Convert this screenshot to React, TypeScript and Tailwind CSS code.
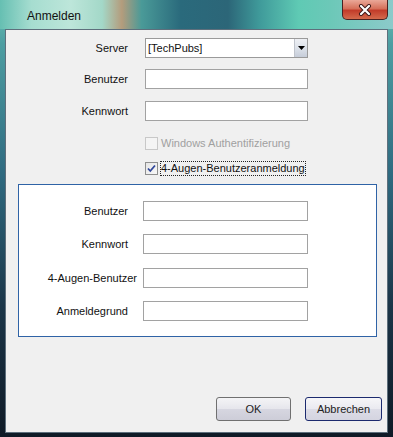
import React from "react";

function TextBox({ w }: { w: string }) {
  return <div className={`${w} h-[20px] border border-[#a2a2a2] bg-white`} />;
}

function TopRow({ label, children, mt }: { label: string; children: React.ReactNode; mt: string }) {
  return (
    <div className={`flex items-center h-[20px] ${mt}`}>
      <div className="w-[122px] text-right">{label}</div>
      <div className="ml-[17px]">{children}</div>
    </div>
  );
}

function GroupRow({ label, mt, labelShift }: { label: string; mt: string; labelShift?: string }) {
  return (
    <div className={`flex items-center h-[20px] ${mt}`}>
      <div className="w-[109px] text-right whitespace-nowrap">
        <span className={labelShift ?? ""}>{label}</span>
      </div>
      <div className="ml-[15px]">
        <TextBox w="w-[165px]" />
      </div>
    </div>
  );
}

export default function App() {
  return (
    <div className="relative w-[393px] h-[437px] overflow-hidden flex flex-col [font-family:'Liberation_Sans',Arial,sans-serif] text-[11px] text-[#111] bg-[linear-gradient(180deg,#6cc4b4_0%,#4d9ea2_10%,#2f6a80_40%,#1b3548_70%,#0f1a26_100%)]">
      {/* title bar */}
      <div className="h-[29px] shrink-0 flex justify-between bg-[linear-gradient(90deg,#66bfb2_0%,#a6ddd0_8%,#bde6da_18%,#a3d8c8_26%,#b49c7c_31%,#4a9a98_36%,#2a6a7c_46%,#2c6678_58%,#3f9a9a_66%,#5fcab4_76%,#6cc8b8_84%,#8ccaca_100%)]">
        <div className="pl-[27px] pt-[7px] text-[12px] text-[#111]">Anmelden</div>
        <div className="mr-[5px] w-[46px] h-[20px] rounded-b-[5px] border border-t-0 border-[#4a2222] bg-[linear-gradient(180deg,#eaa898_0%,#d6705a_45%,#c23c2a_55%,#d46a4c_100%)] flex items-center justify-center">
          <svg width="14" height="12" viewBox="0 0 14 12">
            <path d="M3 2 L11 10 M11 2 L3 10" stroke="#3a1616" strokeWidth="4" strokeLinecap="round" />
            <path d="M3 2 L11 10 M11 2 L3 10" stroke="#ffffff" strokeWidth="2.2" strokeLinecap="round" />
          </svg>
        </div>
      </div>

      {/* client area */}
      <div className="mx-[5px] mb-[4px] flex-1 border border-[#5e6f7c] bg-[#f0f0f0] flex flex-col">
        <TopRow label="Server" mt="mt-[8px]">
          <div className="w-[163px] h-[20px] border border-[#9a9a9a] bg-white flex items-center">
            <span className="pl-[2px] flex-1 text-[#111]">[TechPubs]</span>
            <div className="w-[13px] h-[18px] bg-[linear-gradient(180deg,#eef0f4_0%,#dde2ea_50%,#c6cdd9_100%)] border-l border-[#c0c4cc] flex items-center justify-center">
              <svg width="7" height="4" viewBox="0 0 7 4">
                <path d="M0 0 L7 0 L3.5 4 Z" fill="#000" />
              </svg>
            </div>
          </div>
        </TopRow>
        <TopRow label="Benutzer" mt="mt-[11px]">
          <TextBox w="w-[163px]" />
        </TopRow>
        <TopRow label="Kennwort" mt="mt-[12px]">
          <TextBox w="w-[163px]" />
        </TopRow>

        <div className="mt-[15px] h-[15px] ml-[139px] flex items-center">
          <div className="w-[13px] h-[13px] border border-[#c8c8c8] bg-[#f4f4f4]" />
          <span className="ml-[3px] text-[#a0a0a0]">Windows Authentifizierung</span>
        </div>
        <div className="mt-[10px] h-[15px] ml-[139px] flex items-center">
          <div className="w-[13px] h-[13px] border border-[#8e8f8f] bg-[linear-gradient(135deg,#e6e6e6_0%,#f8f8f8_100%)] flex items-center justify-center">
            <svg width="11" height="11" viewBox="0 0 11 11">
              <path d="M2 5.5 L4.3 8 L9 2.5" stroke="#30479a" strokeWidth="1.8" fill="none" />
            </svg>
          </div>
          <span className="ml-[2px] border border-dotted border-[#222] leading-[13px] text-[#111]">4-Augen-Benutzeranmeldung</span>
        </div>

        <div className="mt-[8px] ml-[12px] w-[359px] border border-[#2f63a6] bg-white pt-[16px] pb-[15px]">
          <GroupRow label="Benutzer" mt="" />
          <GroupRow label="Kennwort" mt="mt-[13px]" />
          <GroupRow label="4-Augen-Benutzer" mt="mt-[14px]" labelShift="relative left-[9px]" />
          <GroupRow label="Anmeldegrund" mt="mt-[13px]" />
        </div>

        <div className="flex-1" />
        <div className="flex justify-end gap-[14px] pr-[5px] pb-[11px]">
          <div className="w-[75px] h-[24px] rounded-[3px] border border-[#707070] bg-[linear-gradient(180deg,#f4f4f6_0%,#e6e6ec_48%,#d6d6e0_52%,#cdcdd8_100%)] flex items-center justify-center text-[#222]">
            OK
          </div>
          <div className="w-[77px] h-[24px] rounded-[3px] border border-[#1c2a6e] bg-[linear-gradient(180deg,#f6f6f8_0%,#eaeaf0_48%,#dcdce6_52%,#d4d4e0_100%)] flex items-center justify-center text-[#222]">
            Abbrechen
          </div>
        </div>
      </div>
    </div>
  );
}
